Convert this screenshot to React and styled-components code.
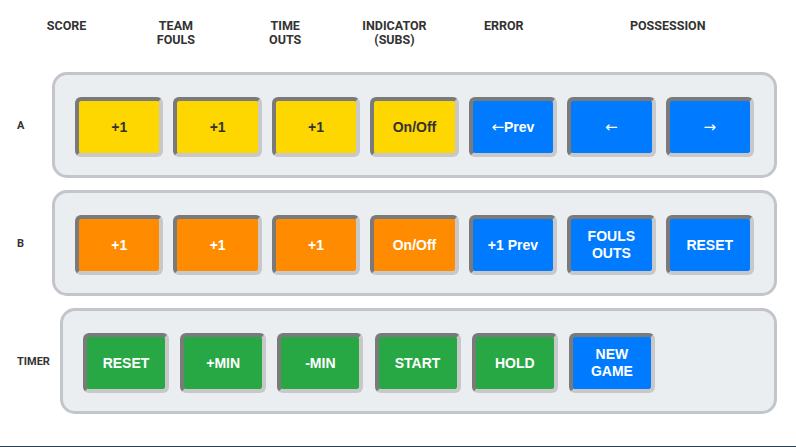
import React from "react";
import styled, { createGlobalStyle } from "styled-components";

const GlobalStyle = createGlobalStyle`
  body {
    margin: 0;
    background: #ffffff;
    font-family: Roboto, "Liberation Sans", Arial, sans-serif;
    color: #333333;
  }
`;

const Page = styled.div`
  display: flex;
  flex-direction: column;
  padding: 18px 19px 0 17px;
`;

const HeaderRow = styled.div`
  display: flex;
  margin-left: -5px;
  padding-top: 1px;
  height: 28px;
  margin-bottom: 25px;
`;

const HeaderCell = styled.div`
  width: ${props => (props.wide ? 220 : 110)}px;
  text-align: center;
  font-size: 12.5px;
  font-weight: 700;
  line-height: 14px;
  color: #333;
`;

const Rows = styled.div`
  display: flex;
  flex-direction: column;
  gap: 12px;
`;

const Row = styled.div`
  display: flex;
  align-items: center;
`;

const RowLabel = styled.div`
  width: ${props => props.width}px;
  flex-shrink: 0;
  font-size: 11px;
  font-weight: 700;
  color: #333;
`;

const Panel = styled.div`
  flex: 1;
  display: flex;
  gap: ${props => props.gap}px;
  padding: 22px 20px 18px;
  background: #ebeef0;
  border: 3px solid #c2c6ca;
  border-radius: 15px;
`;

const colors = {
  yellow: { bg: "#ffd700", fg: "#333333" },
  orange: { bg: "#ff8c00", fg: "#ffffff" },
  blue: { bg: "#007bff", fg: "#ffffff" },
  green: { bg: "#28a745", fg: "#ffffff" }
};

const Button = styled.button`
  box-sizing: border-box;
  flex: ${props => (props.fixed ? `0 0 ${props.fixed}px` : "1 1 0")};
  height: 60px;
  display: flex;
  align-items: center;
  justify-content: center;
  text-align: center;
  padding: 0 4px;
  background: ${props => colors[props.color].bg};
  color: ${props => colors[props.color].fg};
  font-family: "Liberation Sans", Arial, sans-serif;
  font-size: 14px;
  font-weight: 700;
  line-height: 17px;
  border-width: 4px;
  border-style: solid;
  border-color: #7a7a7a #c8c8c8 #c8c8c8 #7a7a7a;
  border-radius: 6px;
  cursor: pointer;
`;

const Arrow = styled.span`
  font-family: "DejaVu Sans", sans-serif;
  font-weight: 400;
  font-size: 15px;
`;

const Footer = styled.div`
  margin: 32px -19px 0 -17px;
  height: 20px;
  background: #2c3e50;
`;

const headers = [
  ["SCORE"],
  ["TEAM", "FOULS"],
  ["TIME", "OUTS"],
  ["INDICATOR", "(SUBS)"],
  ["ERROR"]
];

const rowA = [
  ["yellow", "+1"],
  ["yellow", "+1"],
  ["yellow", "+1"],
  ["yellow", "On/Off"],
  ["blue", <><Arrow>←</Arrow>Prev</>],
  ["blue", <Arrow>←</Arrow>],
  ["blue", <Arrow>→</Arrow>]
];

const rowB = [
  ["orange", "+1"],
  ["orange", "+1"],
  ["orange", "+1"],
  ["orange", "On/Off"],
  ["blue", "+1 Prev"],
  ["blue", "FOULS OUTS"],
  ["blue", "RESET"]
];

const timer = [
  ["green", "RESET"],
  ["green", "+MIN"],
  ["green", "-MIN"],
  ["green", "START"],
  ["green", "HOLD"],
  ["blue", "NEW GAME"]
];

export default function App() {
  return (
    <>
      <GlobalStyle />
      <Page>
        <HeaderRow>
          {headers.map((lines, i) => (
            <HeaderCell key={i}>
              {lines.map((l, j) => (
                <div key={j}>{l}</div>
              ))}
            </HeaderCell>
          ))}
          <HeaderCell wide>POSSESSION</HeaderCell>
        </HeaderRow>
        <Rows>
          <Row>
            <RowLabel width={35}>A</RowLabel>
            <Panel gap={10}>
              {rowA.map(([c, t], i) => (
                <Button key={i} color={c}>
                  {t}
                </Button>
              ))}
            </Panel>
          </Row>
          <Row>
            <RowLabel width={35}>B</RowLabel>
            <Panel gap={10}>
              {rowB.map(([c, t], i) => (
                <Button key={i} color={c}>
                  {t}
                </Button>
              ))}
            </Panel>
          </Row>
          <Row>
            <RowLabel width={43}>TIMER</RowLabel>
            <Panel gap={11.2}>
              {timer.map(([c, t], i) => (
                <Button key={i} color={c} fixed={86}>
                  {t}
                </Button>
              ))}
            </Panel>
          </Row>
        </Rows>
        <Footer />
      </Page>
    </>
  );
}
